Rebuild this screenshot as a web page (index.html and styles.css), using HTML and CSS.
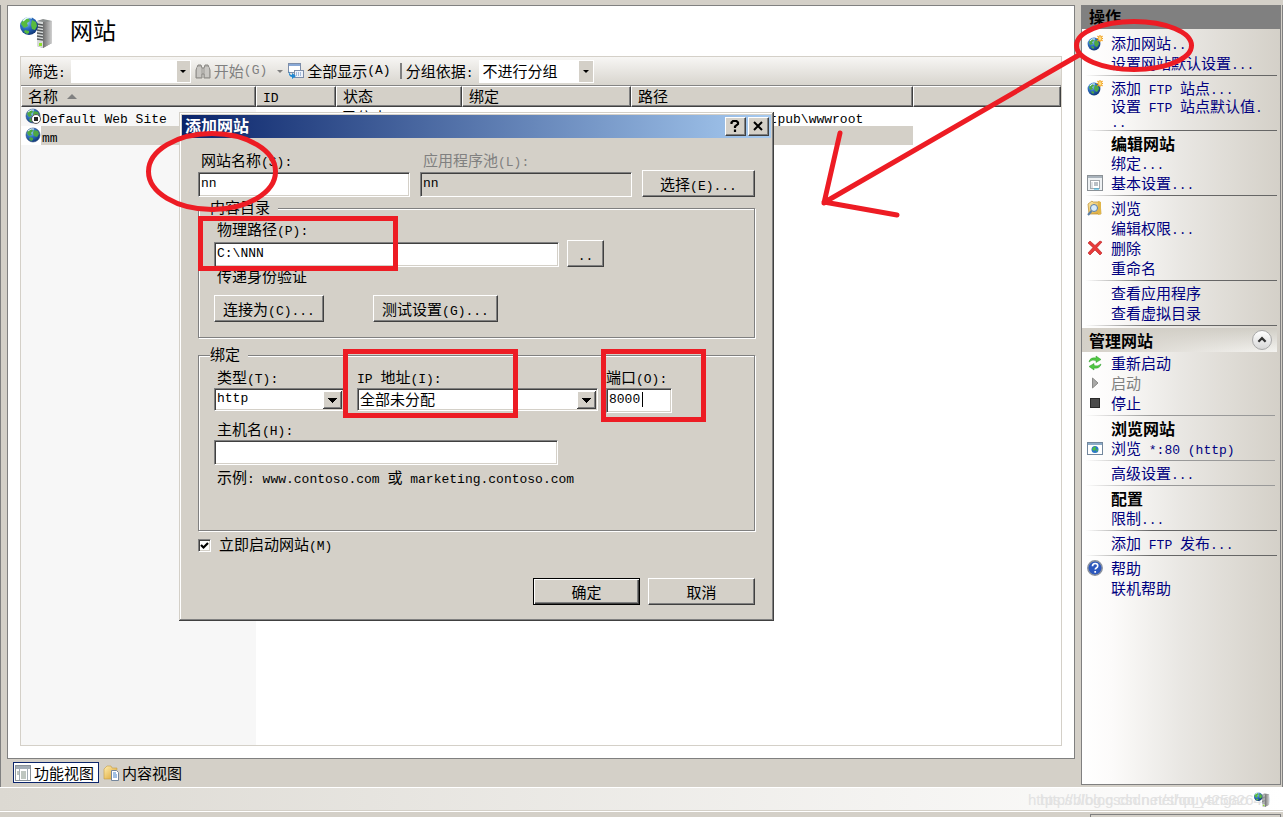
FILE: index.html
```html
<!DOCTYPE html>
<html lang="zh-CN">
<head>
<meta charset="utf-8">
<title>网站</title>
<link rel="stylesheet" href="styles.css">
</head>
<body>
<svg class="defs" aria-hidden="true">
  <defs>
    <radialGradient id="sea" cx="35%" cy="30%" r="75%">
      <stop offset="0" stop-color="#9fd0ff"/><stop offset=".45" stop-color="#2f72c4"/><stop offset="1" stop-color="#0d3272"/>
    </radialGradient>
    <linearGradient id="metal" x1="0" x2="1"><stop offset="0" stop-color="#6f6f6f"/><stop offset="1" stop-color="#d0d0d0"/></linearGradient>
    <linearGradient id="folder" x1="0" x2="1" y2="1"><stop offset="0" stop-color="#ffeeb0"/><stop offset="1" stop-color="#d9a02c"/></linearGradient>
  </defs>
  <symbol id="globe" viewBox="0 0 16 16">
    <circle cx="8" cy="8" r="7" fill="url(#sea)" stroke="#2a4c7c" stroke-width=".6"/>
    <path d="M2 6c1-3 3-4 5-4l1 2-2 2 1 2-3 1zM9 3l4 1 1 3-2 3-3-1-1-3zM5 10l3 1v2l-2 1-2-2z" fill="#4ea843"/>
    <path d="M3 4q3-3 6-2" fill="none" stroke="#e6f5ff" stroke-width="1"/>
  </symbol>
  <symbol id="globe-new" viewBox="0 0 16 16">
    <circle cx="7" cy="9" r="6.4" fill="url(#sea)"/>
    <path d="M2 7c1-2 2-3 4-3l1 2-2 1 1 2-3 1zM8 5l3 1 1 3-2 3-2-1-1-3zM5 11l2 1v1l-1 1-2-2z" fill="#4ea843"/>
    <path d="M3 6q2-3 5-2" fill="none" stroke="#e6f5ff"/>
    <path d="M13 0v7M9.500 3.500h7M10.500 1l5 5M15.500 1l-5 5" stroke="#f2a11c" stroke-width="1.200"/>
    <circle cx="13" cy="3.500" r="1.500" fill="#ffe38a"/>
  </symbol>
  <symbol id="server" viewBox="0 0 34 34">
    <path d="M17 5l6-2 9 2v22l-9 5-6-2z" fill="#8b8f8f"/>
    <path d="M23 6l9-1v22l-9 5z" fill="url(#metal)"/>
    <path d="M17 5l6 1v26l-6-2z" fill="#d7dada"/>
    <path d="M17 8l6 1M17 11l6 1M17 14l6 1M17 17l6 1M17 20l6 1M17 23l6 1" stroke="#56595b" stroke-width="1.300"/>
    <rect x="19" y="27" width="3" height="3" fill="#8fe02c"/>
    <circle cx="9" cy="10" r="9" fill="url(#sea)"/>
    <path d="M1 8c1-4 4-6 7-6l2 3-3 2 1 3-4 2zM12 4l4 2 1 4-2 4-3-1-1-4zM5 14l4 1v2l-2 1-3-2z" fill="#58bb3e"/>
    <path d="M3 5q4-5 9-3" fill="none" stroke="#e9f8ff" stroke-width="1.500"/>
  </symbol>
  <symbol id="glasses" viewBox="0 0 16 16">
    <path d="M1 15V7l2-5h3l1 3h2l1-3h3l2 5v8h-6v-4H7v4z" fill="#b3b1ad" stroke="#8a8884"/>
    <path d="M3 4v10M5 4v10M11 4v10M13 4v10" stroke="#dedcd8"/>
  </symbol>
  <symbol id="showall" viewBox="0 0 16 16">
    <rect x=".5" y=".5" width="12" height="9" fill="#fff" stroke="#7d8da8"/><path d="M1 2h11" stroke="#8aa9d6" stroke-width="2"/>
    <rect x="6.500" y="7.500" width="9" height="7" fill="#eef3fb" stroke="#7d8da8"/>
    <path d="M8 10h6M8 12h6" stroke="#5a82bb" stroke-dasharray="1 1"/>
    <path d="M1 7q0 5 3 5v-2l4 3-4 3v-2q-4 0-3-7z" fill="#1e87d2"/>
  </symbol>
  <symbol id="form" viewBox="0 0 16 16">
    <rect x=".5" y=".5" width="15" height="15" fill="#eef1f3" stroke="#8b9196"/>
    <path d="M1 2h14" stroke="#a8b2bb" stroke-width="2"/>
    <rect x="3.500" y="5.500" width="9" height="8" fill="#fff" stroke="#a4a9ad"/>
    <path d="M4.500 8h1M4.500 10h1M4.500 12h1M7 8h4M7 10h4" stroke="#75808a"/><path d="M7 14h5" stroke="#2bb1df"/>
  </symbol>
  <symbol id="explore" viewBox="0 0 16 16">
    <path d="M1 4l4-3 1 1h7l1 12H2z" fill="url(#folder)" stroke="#b98b2c" stroke-width=".7"/>
    <path d="M11 1l3 1v12l-3 1z" fill="#e0b64b"/>
    <circle cx="7" cy="8" r="3.500" fill="#d8ecfb" stroke="#5b7ea6"/><path d="M4.500 11L1 15" stroke="#5b7ea6" stroke-width="2"/>
  </symbol>
  <symbol id="cross" viewBox="0 0 16 16">
    <path d="M1 3l2-2 5 4.500 5-4.500 2 1-5 5.500 5 5.500-2 2-5-5-5 5-2-2 5-5.500z" fill="#e83a3a" stroke="#b51c1c" stroke-width=".6"/>
  </symbol>
  <symbol id="recycle" viewBox="0 0 16 16">
    <path d="M2 7q1-5 7-4V1l5 3.500-5 3V5.500Q5 4 2 7zM14 9q-1 5-7 4v2l-5-3.500 5-3v2q4 1.500 7-1.500z" fill="#50c843" stroke="#2f9a2a" stroke-width=".5"/>
  </symbol>
  <symbol id="play" viewBox="0 0 16 16"><path d="M5.500 3v10l5.500-5z" fill="#a9a9a7" stroke="#8a8a88"/></symbol>
  <symbol id="stop" viewBox="0 0 16 16"><rect x="3.500" y="3.500" width="9" height="9" fill="#4b4b4b" stroke="#292929"/></symbol>
  <symbol id="window" viewBox="0 0 16 16">
    <rect x=".5" y="2.500" width="15" height="12" fill="#fff" stroke="#73879c"/><path d="M1 4h14" stroke="#8cabc8" stroke-width="2"/>
    <circle cx="8" cy="9.500" r="3.500" fill="#2b78c6"/><path d="M5 9l3-3 1 3-2 2zM9 10l2-1-1 3z" fill="#4fc13a"/>
  </symbol>
  <symbol id="help" viewBox="0 0 16 16">
    <circle cx="8" cy="8" r="7.200" fill="#2d58bd" stroke="#8b929e" stroke-width="1.500"/>
    <path d="M5.500 6.200q0-2.700 2.700-2.700t2.500 2.400q0 1.200-1.400 2-1 .6-1 1.700M8.200 11v1.800" fill="none" stroke="#fff" stroke-width="1.700"/>
  </symbol>
  <symbol id="features" viewBox="0 0 16 16">
    <rect x=".5" y=".5" width="15" height="15" fill="#fff" stroke="#8a9298"/><path d="M1 2.500h14" stroke="#a3adb6" stroke-width="3"/>
    <path d="M4.500 4v11M12.500 4v11" stroke="#a3adb6"/><path d="M2 7h2M2 9h2M6 7h5M6 9h5M6 11h5M6 13h5" stroke="#7f8d80"/>
  </symbol>
  <symbol id="content" viewBox="0 0 16 16">
    <path d="M1 4l3-3h4l1 2h5l-1 11H1z" fill="url(#folder)" stroke="#c59c45" stroke-width=".6"/>
    <path d="M8.500 5.500h5l2 2v8h-7z" fill="#fff" stroke="#74869c"/><path d="M10 8h3M10 10h4M10 12h4" stroke="#4280c8"/>
  </symbol>
</svg>

<div class="workspace">
  <main class="left">
    <section class="view">
      <header class="view-head">
        <svg class="big" aria-hidden="true"><use href="#server"/></svg>
        <h1>网站</h1>
      </header>
      <div class="listbox">
        <div class="toolbar">
          <label for="filter">筛选<i>:</i></label>
          <span class="flat-combo filter"><input id="filter" type="text"><button type="button" aria-label="展开"></button></span>
          <button type="button" class="tool" disabled><svg class="ic"><use href="#glasses"/></svg>开始<i>(G)</i></button>
          <span class="drop"></span>
          <button type="button" class="tool"><svg class="ic"><use href="#showall"/></svg>全部显示<i>(A)</i></button>
          <span class="bar"></span>
          <label for="group">分组依据<i>:</i></label>
          <span class="flat-combo group"><select id="group"><option>不进行分组</option></select></span>
        </div>
        <table class="sites">
          <colgroup><col class="c1"><col class="c2"><col class="c3"><col class="c4"><col class="c5"><col></colgroup>
          <thead><tr><th>名称<span class="sort"></span></th><th><i>ID</i></th><th>状态</th><th>绑定</th><th>路径</th><th></th></tr></thead>
          <tbody>
            <tr><td><svg class="ic"><use href="#globe"/><circle cx="11" cy="11" r="4.500" fill="#fff" stroke="#555"/><rect x="9" y="9" width="4" height="4" fill="#222"/></svg><i>Default Web Site</i></td><td></td><td>已停止 <i>(http)</i></td><td><i>*:80 (http)</i></td><td><i>%SystemDrive%\inetpub\wwwroot</i></td><td></td></tr>
            <tr class="selected"><td><svg class="ic"><use href="#globe"/></svg><i>mm</i></td><td></td><td></td><td></td><td></td><td></td></tr>
          </tbody>
        </table>
      </div>
    </section>
    <nav class="tabs">
      <button type="button" class="active"><svg class="ic"><use href="#features"/></svg>功能视图</button>
      <button type="button"><svg class="ic"><use href="#content"/></svg>内容视图</button>
    </nav>
  </main>

  <aside class="actions">
    <h2>操作</h2>
    <ul>
      <li><svg class="ic"><use href="#globe-new"/></svg><a href="#">添加网站<i>...</i></a></li>
      <li><a href="#">设置网站默认设置<i>...</i></a></li>
      <li class="sep"></li>
      <li><svg class="ic"><use href="#globe-new"/></svg><a href="#">添加<i> FTP </i>站点<i>...</i></a></li>
      <li class="tall"><a href="#">设置<i> FTP </i>站点默认值<i>.<br>..</i></a></li>
      <li class="sep"></li>
      <li><h3>编辑网站</h3></li>
      <li><a href="#">绑定<i>...</i></a></li>
      <li><svg class="ic"><use href="#form"/></svg><a href="#">基本设置<i>...</i></a></li>
      <li class="sep"></li>
      <li><svg class="ic"><use href="#explore"/></svg><a href="#">浏览</a></li>
      <li><a href="#">编辑权限<i>...</i></a></li>
      <li><svg class="ic"><use href="#cross"/></svg><a href="#">删除</a></li>
      <li><a href="#">重命名</a></li>
      <li class="sep"></li>
      <li><a href="#">查看应用程序</a></li>
      <li><a href="#">查看虚拟目录</a></li>
      <li class="sep"></li>
    </ul>
    <div class="section"><h3>管理网站</h3>
      <button type="button" aria-label="折叠"><svg viewBox="0 0 20 20"><path d="M6 12l4-4 4 4" fill="none" stroke="#333" stroke-width="2.500"/></svg></button>
    </div>
    <ul>
      <li><svg class="ic"><use href="#recycle"/></svg><a href="#">重新启动</a></li>
      <li class="off"><svg class="ic"><use href="#play"/></svg><span>启动</span></li>
      <li><svg class="ic"><use href="#stop"/></svg><a href="#">停止</a></li>
      <li class="sep soft"></li>
      <li><h3>浏览网站</h3></li>
      <li><svg class="ic"><use href="#window"/></svg><a href="#">浏览<i> *:80 (http)</i></a></li>
      <li class="sep soft"></li>
      <li><a href="#">高级设置<i>...</i></a></li>
      <li class="sep soft"></li>
      <li><h3>配置</h3></li>
      <li><a href="#">限制<i>...</i></a></li>
      <li class="sep"></li>
      <li><a href="#">添加<i> FTP </i>发布<i>...</i></a></li>
      <li class="sep"></li>
      <li><svg class="ic"><use href="#help"/></svg><a href="#">帮助</a></li>
      <li><a href="#">联机帮助</a></li>
    </ul>
  </aside>
</div>

<footer class="status">
  <span class="mark"><span>https://blog.csdn.net/shouyangao</span><span class="over">https://blog.csdn.net/qq_42582640</span></span>
  <svg class="ic" viewBox="0 0 34 34"><use href="#server"/></svg>
</footer>
<div class="below"><div></div></div>

<form class="dialog" role="dialog" aria-labelledby="dlg-title">
  <div class="titlebar"><h2 id="dlg-title">添加网站</h2>
    <button type="button" aria-label="帮助"><svg viewBox="0 0 18 16"><path d="M5.500 6V4.500L7 3h3.500L12 4.500V6L9 8.500V10M9 11.500V14" fill="none" stroke="#000" stroke-width="2.200"/></svg></button>
    <button type="button" aria-label="关闭"><svg viewBox="0 0 18 16"><path d="M5 4l8 8M13 4l-8 8" stroke="#000" stroke-width="2"/></svg></button>
  </div>
  <div class="body">
    <div class="row top">
      <div class="field"><label for="name">网站名称<i>(S):</i></label><input id="name" type="text" value="nn"></div>
      <div class="field off"><label for="pool">应用程序池<i>(L):</i></label><input id="pool" type="text" value="nn" disabled></div>
      <button type="button" class="btn pick">选择<i>(E)...</i></button>
    </div>
    <fieldset class="content">
      <legend>内容目录</legend>
      <label for="path">物理路径<i>(P):</i></label>
      <div class="row pathrow"><input id="path" type="text" value="C:\NNN"><button type="button" class="btn dots"><i>..</i></button></div>
      <p>传递身份验证</p>
      <div class="row auth"><button type="button" class="btn">连接为<i>(C)...</i></button><button type="button" class="btn wide">测试设置<i>(G)...</i></button></div>
    </fieldset>
    <fieldset class="binding">
      <legend>绑定</legend>
      <div class="grid">
        <div class="field type"><label for="type">类型<i>(T):</i></label><span class="combo"><select id="type" class="latin"><option>http</option></select></span></div>
        <div class="field flush"><label for="ip"><i>IP </i>地址<i>(I):</i></label><span class="combo"><select id="ip"><option>全部未分配</option></select></span></div>
        <div class="field flush"><label for="port">端口<i>(O):</i></label><span class="port"><input id="port" type="text" value="8000"><span class="caret"></span></span></div>
      </div>
      <div class="field host"><label for="host">主机名<i>(H):</i></label><input id="host" type="text"></div>
      <p>示例<i>: www.contoso.com </i>或<i> marketing.contoso.com</i></p>
    </fieldset>
    <div class="check"><input id="start" type="checkbox" checked><label for="start">立即启动网站<i>(M)</i></label></div>
    <div class="buttons"><button type="submit" class="btn default">确定</button><button type="button" class="btn">取消</button></div>
  </div>
</form>

<svg class="ink" viewBox="0 0 1283 817" aria-hidden="true">
  <g fill="none" stroke="#ed1c24" stroke-width="5" stroke-linecap="round">
    <ellipse cx="212" cy="171.500" rx="63.500" ry="38"/>
    <ellipse cx="1134" cy="45.500" rx="57.500" ry="24"/>
    <path d="M1079 55L825 202M840 133l-16 70M824 202l73 13"/>
    <path stroke-linecap="butt" d="M200.500 218.500h195v50h-195zM345.500 351.500h170v64h-170zM603.500 351.500h100v68h-100z"/>
  </g>
</svg>
</body>
</html>
```
FILE: styles.css
```css
* { box-sizing: border-box; }
body {
  margin: 0;
  min-height: 100vh;
  display: flex;
  flex-direction: column;
  background: #d4d0c8;
  color: #000;
  font: 15px/20px "Noto Sans CJK SC", sans-serif;
}
i, .latin, input[type="text"] {
  font-family: "Liberation Mono", "Noto Sans CJK SC", monospace;
  font-size: 13px;
  font-style: normal;
  white-space: pre;
}
i { line-height: 0; }
h1, h2, h3, p, ul { margin: 0; padding: 0; list-style: none; }
button, input, select { font: inherit; color: inherit; border-radius: 0; margin: 0; }
input[type="text"] { font: 13px/16px "Liberation Mono", monospace; min-width: 0; }
.defs { position: absolute; width: 0; height: 0; }
.ic { width: 16px; height: 16px; flex: none; }

.workspace {
  flex: 1;
  display: flex;
  gap: 6px;
  margin-top: 5px;
  padding: 0 1px 2px 6px;
  border-left: 1px solid #808080;
  border-right: 1px solid #808080;
}
.left { flex: 1; min-width: 0; display: flex; flex-direction: column; }
.view {
  flex: 1;
  display: flex;
  flex-direction: column;
  padding: 0 12px 12px;
  border: 1px solid #808080;
  background: #fff;
}
.view-head { display: flex; align-items: center; gap: 16px; height: 50px; }
.big { width: 34px; height: 34px; margin-top: 4px; }
.view-head h1 { padding-bottom: 4px; font-size: 23px; line-height: 32px; font-weight: 400; }
.listbox {
  flex: 1;
  border: 1px solid #d4d0c8;
  background: linear-gradient(to right, #f7f7f7 235px, #fff 235px);
}
.toolbar {
  display: flex;
  align-items: center;
  height: 29px;
  padding-left: 7px;
  border-bottom: 1px solid #848484;
  background: linear-gradient(#f7f6f4, #d8d5ce);
}
.tool { display: flex; align-items: center; padding: 0; border: 0; background: none; }
.tool .ic { margin-right: 3px; }
.tool:disabled { color: #808080; }
.drop { margin: 0 5px 0 10px; border: 3px solid transparent; border-top-color: #808080; border-bottom: 0; }
.bar { width: 2px; height: 16px; margin: 0 4px 0 9px; background: #808080; }
.flat-combo {
  position: relative;
  display: flex;
  height: 23px;
  border: 1px solid #fff;
  background: #fff;
}
.flat-combo input, .flat-combo select { flex: 1; width: 0; padding: 0 3px; border: 0; background: #fff; appearance: none; }
.flat-combo button { width: 13px; padding: 0; border: 0; background: #d4d0c8; }
.flat-combo.group::before { content: ""; position: absolute; right: 0; top: 0; bottom: 0; width: 14px; background: #d4d0c8; pointer-events: none; }
.flat-combo::after {
  content: "";
  position: absolute;
  right: 4px;
  top: 9px;
  border: 3px solid transparent;
  border-top-color: #000;
  border-bottom: 0;
  pointer-events: none;
}
.filter { width: 120px; margin: 0 4px 0 5px; }
.group { width: 115px; margin-left: 5px; }

.sites { width: 100%; table-layout: fixed; border-spacing: 0; }
.c1 { width: 235px; }
.c2 { width: 80px; }
.c3 { width: 126px; }
.c4 { width: 169px; }
.c5 { width: 282px; }
.sites th {
  height: 21px;
  padding: 0 6px 2px;
  line-height: 17px;
  text-align: left;
  font-weight: 400;
  background: #d4d0c8;
  border: 1px solid #404040;
  border-top-color: #fff;
  border-left-color: #fff;
  box-shadow: inset -1px -1px #808080;
}
.sort { display: inline-block; margin: 0 0 3px 9px; border: 5px solid transparent; border-bottom-color: #808080; border-top: 0; }
.sites td { height: 19px; padding: 0 6px; line-height: 19px; white-space: nowrap; }
.sites td:first-child { padding: 0 0 0 4px; }
.sites td .ic { margin: 1px 1px 0 0; vertical-align: top; }
.selected td { background: #d4d0c8; }
.selected td:first-child { background: linear-gradient(to right, #fff 20px, #d4d0c8 20px); }
.selected td:last-child { background: none; }

.tabs { display: flex; gap: 2px; height: 26px; padding: 3px 0 2px 6px; }
.tabs button { display: flex; align-items: center; gap: 3px; padding: 0 4px 0 1px; line-height: 16px; border: 1px solid transparent; background: none; }
.tabs .active { border-color: #0a246a; background: #fff; }

.actions {
  flex: 0 0 200px;
  padding: 0 3px 0 0;
  border: 1px solid #808080;
  border-top: 0;
  background: linear-gradient(to right, #fff, #fcfbfa 15%, #e9e7e3 50%, #d4d0c8);
}
.actions h2 { height: 24px; margin-right: -3px; padding-left: 7px; font-size: 16px; line-height: 23px; background: #808080; }
.actions ul { padding-top: 4px; }
.actions .section + ul { padding-top: 1px; }
.actions li { display: flex; align-items: center; height: 20px; padding-left: 29px; white-space: nowrap; }
.actions li .ic { margin: 0 8px 0 -24px; }
.actions .tall { height: 30px; line-height: 15px; }
.actions a { color: #000080; text-decoration: none; }
.actions .off { color: #808080; }
.actions h3 { font-size: 16px; line-height: 20px; }
.actions li.sep { height: 1px; margin: 2px 0 2px 3px; padding: 0; background: linear-gradient(to right, transparent, #666 35%); }
.actions li.soft { margin-right: 2px; background: linear-gradient(to right, transparent, #999 35%); }
.section {
  display: flex;
  align-items: center;
  justify-content: space-between;
  height: 24px;
  padding: 0 5px 0 7px;
  background: linear-gradient(to right, #d4d0c8, transparent), linear-gradient(#d0cdc5, #f4f3f0);
}
.section button { display: flex; width: 20px; height: 20px; padding: 0; border: 1px solid #a9a9a9; border-radius: 50%; background: linear-gradient(#fff, #d8d8d8); }

.status {
  display: flex;
  align-items: center;
  justify-content: flex-end;
  height: 25px;
  padding-right: 13px;
  border-top: 1px solid #fff;
  border-bottom: 1px solid #fff;
  box-shadow: inset 0 -1px #d4d0c8;
  background: linear-gradient(to right, #dcd9d2, #fff);
}
.mark {
  position: relative;
  width: 226px;
  color: #e2e2e2;
  font: 15px/20px "Liberation Sans", sans-serif;
  white-space: nowrap;
}
.over { position: absolute; left: 12px; top: 0; }
.status .ic { position: relative; }
.below { height: 5px; padding: 2px 2px 0 1090px; }
.below div { height: 3px; border: 1px solid #808080; border-bottom: 0; }

.dialog {
  position: absolute;
  left: 179px;
  top: 112px;
  width: 595px;
  padding: 3px;
  background: #d4d0c8;
  box-shadow: inset -1px -1px #404040, inset 1px 1px #d4d0c8, inset -2px -2px #808080, inset 2px 2px #fff;
}
.titlebar {
  display: flex;
  align-items: center;
  gap: 2px;
  height: 23px;
  padding: 0 2px 0 3px;
  background: linear-gradient(to right, #0a246a, #a6caf0);
}
.titlebar h2 { flex: 1; padding-bottom: 3px; color: #fff; font-size: 16px; line-height: 20px; }
.titlebar button, .btn {
  border: 1px solid #404040;
  border-top-color: #fff;
  border-left-color: #fff;
  background: #d4d0c8;
  box-shadow: inset -1px -1px #808080;
}
.titlebar button { display: flex; width: 21px; height: 19px; padding: 0; }
.titlebar svg { width: 18px; height: 16px; }
.body { padding: 13px 16px; }
.row { display: flex; align-items: flex-end; }
.field { display: flex; flex-direction: column; }
.dialog label, .dialog p { display: block; height: 20px; line-height: 18px; padding-left: 3px; white-space: nowrap; }
.dialog .flush label { padding-left: 0; }
.off label { color: #808080; }
.dialog input[type="text"], .combo {
  height: 25px;
  border: 1px solid #fff;
  border-top-color: #808080;
  border-left-color: #808080;
  background: #fff;
  box-shadow: inset 1px 1px #404040, inset -1px -1px #d4d0c8;
}
.dialog input[type="text"] { padding: 0 2px 2px; }
.dialog input:disabled { background: #d4d0c8; color: #000; }
.top { height: 46px; gap: 10px; }
.top .field { flex: 1; }
.top label { height: 21px; }
.btn { height: 27px; padding: 0 8px; line-height: 20px; white-space: nowrap; }
.pick { width: 113px; }
fieldset {
  min-width: 0;
  margin: 0;
  border: 1px solid #808080;
  box-shadow: 1px 1px #fff, inset 1px 1px #fff;
}
legend { height: 20px; margin-left: -4px; padding: 0 8px 0 0; line-height: 18px; background: #d4d0c8; }
.content { margin-top: 1px; padding: 2px 15px 15px; }
.pathrow { gap: 8px; }
.pathrow input { width: 345px; }
.dots { width: 37px; }
.auth { gap: 49px; margin-top: 8px; }
.auth .btn { width: 110px; }
.auth .wide { width: 125px; }
.binding { margin-top: 7px; padding: 3px 15px 42px; }
.grid { display: grid; grid-template-columns: 135px 241px 66px; gap: 0 8px; }
.type { padding-right: 5px; }
.combo { position: relative; display: flex; height: 23px; }
.combo select { flex: 1; width: 0; padding: 0 2px 2px; border: 0; background: none; appearance: none; }
.combo::after {
  content: "";
  position: absolute;
  right: 1px;
  top: 2px;
  width: 19px;
  height: 18px;
  background: linear-gradient(#000, #000) 5px 7px / 9px 1px no-repeat, linear-gradient(#000, #000) 6px 8px / 7px 1px no-repeat, linear-gradient(#000, #000) 7px 9px / 5px 1px no-repeat, linear-gradient(#000, #000) 8px 10px / 3px 1px no-repeat, linear-gradient(#000, #000) 9px 11px / 1px 1px no-repeat, #d4d0c8;
  box-shadow: inset -1px -1px #404040, inset 1px 1px #fff, inset -2px -2px #808080;
  pointer-events: none;
}
.port { position: relative; display: flex; }
.port input { width: 100%; }
.caret { position: absolute; left: 36px; top: 4px; width: 1px; height: 15px; background: #000; }
.host { margin-top: 7px; }
.host input { width: 344px; }
.binding p { margin-top: 3px; }
.check { display: flex; align-items: center; gap: 5px; margin-top: 4px; }
.check input {
  width: 13px;
  height: 13px;
  appearance: none;
  background: #fff;
  border: 1px solid #fff;
  border-top-color: #808080;
  border-left-color: #808080;
  box-shadow: inset 1px 1px #404040, inset -1px -1px #d4d0c8;
}
.check input:checked { background: #fff url("data:image/svg+xml,%3Csvg xmlns='http://www.w3.org/2000/svg' viewBox='0 0 11 11'%3E%3Cpath d='M2 5l2.500 2.500L9 3' fill='none' stroke='%23000' stroke-width='2.200'/%3E%3C/svg%3E") center / 11px 11px; }
.buttons { display: flex; justify-content: flex-end; gap: 8px; margin-top: 23px; }
.buttons .btn { width: 107px; }
.buttons .default { border-color: #000; box-shadow: inset 1px 1px #fff, inset -1px -1px #404040, inset -2px -2px #808080; }

.ink { position: absolute; left: 0; top: 0; width: 1283px; height: 817px; pointer-events: none; }
```
